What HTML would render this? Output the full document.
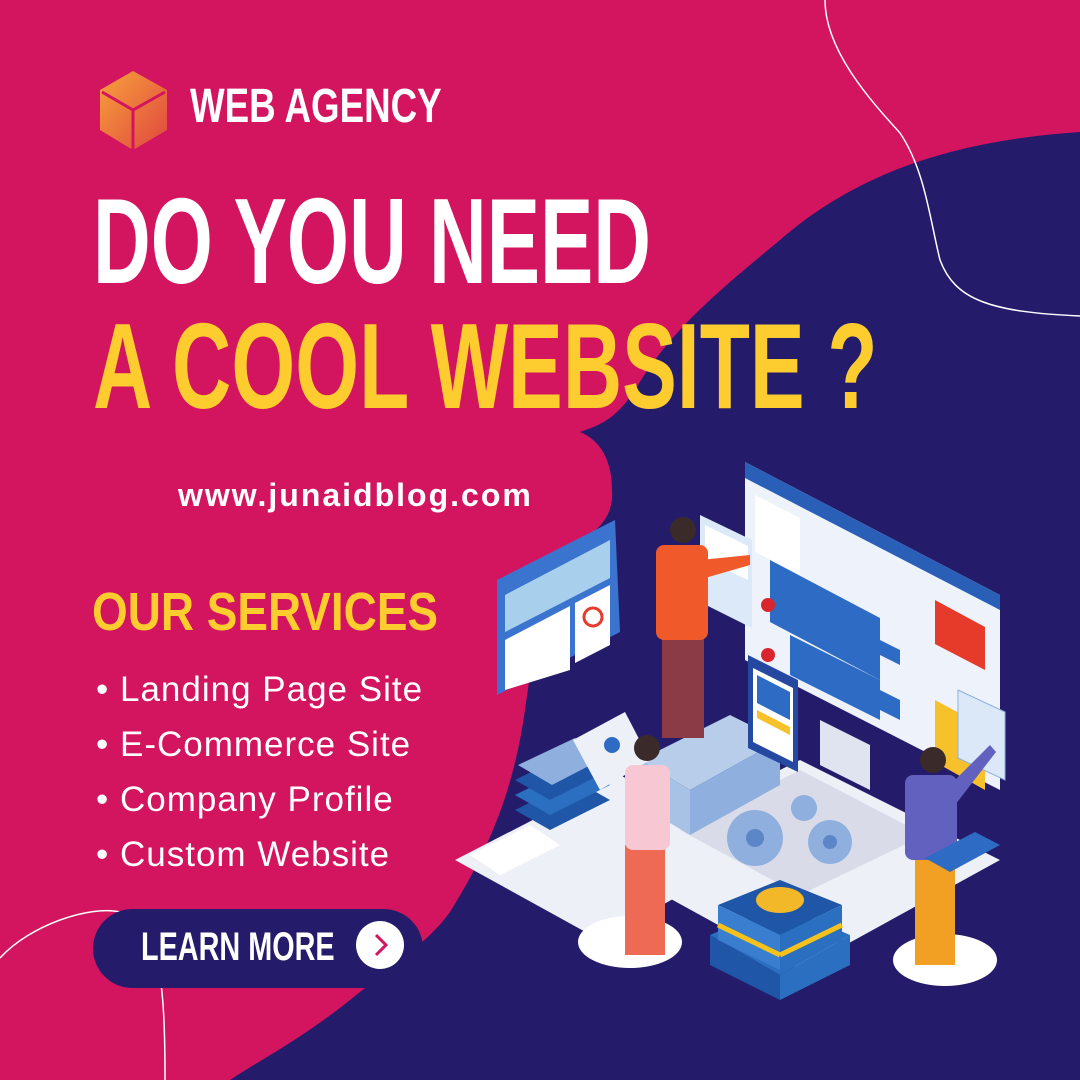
<!DOCTYPE html>
<html><head><meta charset="utf-8"><style>
html,body{margin:0;padding:0}
body{width:1080px;height:1080px;overflow:hidden;background:#d3145f;position:relative;font-family:"Liberation Sans",sans-serif}
svg.bg{position:absolute;left:0;top:0}
.t{position:absolute;white-space:nowrap;font-weight:bold;transform-origin:0 0;line-height:1}
</style></head><body>
<svg class="bg" width="1080" height="1080" viewBox="0 0 1080 1080">
 <path d="M1080 132 C960 140 860 170 780 240 C720 290 670 330 635 390 C615 420 600 425 580 432 C600 440 612 460 612 490 C614 515 600 530 575 545 C545 565 535 640 525 710 C515 780 495 840 450 912 C430 940 400 960 350 1000 C300 1040 260 1060 230 1080 L1080 1080 Z" fill="#241c6a"/>
 <path d="M825 0 C825 50 870 100 900 133 C925 170 930 220 940 260 C955 300 990 312 1080 316" fill="none" stroke="#fff" stroke-width="1.5"/>
 <path d="M0 958 C30 925 90 905 120 912 C160 925 165 980 165 1080" fill="none" stroke="#fff" stroke-width="1.5"/>
 <defs><linearGradient id="g" x1="0" y1="0" x2="1" y2="1"><stop offset="0" stop-color="#f7a23b"/><stop offset="1" stop-color="#e0463f"/></linearGradient></defs>
 <polygon points="133,71 167,90 167,130 133,150 100,130 100,90" fill="url(#g)"/>
 <polyline points="102,92 133,110 165,92" fill="none" stroke="#d3145f" stroke-width="3"/>
 <line x1="133" y1="110" x2="133" y2="150" stroke="#d3145f" stroke-width="3"/>

 <g>
  <polygon points="455,860 620,775 760,850 600,940" fill="#eef0f8"/>
  <polygon points="600,860 800,760 1000,860 800,970" fill="#eef0f8"/>
  <polygon points="680,830 800,770 925,835 800,895" fill="#d9dce8"/>
  <polygon points="640,760 730,715 780,740 690,790" fill="#b8cdea"/>
  <polygon points="690,790 780,740 780,785 690,835" fill="#8fb0de"/>
  <polygon points="640,760 690,790 690,835 640,805" fill="#a8c2e6"/>
  <circle cx="755" cy="838" r="28" fill="#8fb0de"/><circle cx="755" cy="838" r="9" fill="#5d86c8"/>
  <circle cx="830" cy="842" r="22" fill="#8fb0de"/><circle cx="830" cy="842" r="7" fill="#5d86c8"/>
  <circle cx="804" cy="808" r="13" fill="#8fb0de"/>
  <ellipse cx="630" cy="942" rx="52" ry="26" fill="#fff"/>
  <ellipse cx="945" cy="960" rx="52" ry="26" fill="#fff"/>
  <polygon points="710,935 780,905 850,935 780,975" fill="#2a6fc0"/>
  <polygon points="710,935 780,975 780,1000 710,965" fill="#1f56a8"/>
  <polygon points="780,975 850,935 850,965 780,1000" fill="#2a6fc0"/>
  <polygon points="718,905 780,880 842,905 780,935" fill="#1f56a8"/>
  <polygon points="718,905 780,935 780,970 718,940" fill="#3a7ed0"/>
  <polygon points="780,935 842,905 842,940 780,970" fill="#2a6fc0"/>
  <line x1="718" y1="925" x2="780" y2="955" stroke="#f5c21b" stroke-width="5"/>
  <line x1="780" y1="955" x2="842" y2="925" stroke="#f5c21b" stroke-width="5"/>
  <ellipse cx="780" cy="900" rx="24" ry="13" fill="#f3b82a"/>
  <polygon points="470,855 530,825 560,845 500,875" fill="#fff"/>
  <polygon points="515,810 575,780 610,800 550,830" fill="#1f56a8"/>
  <polygon points="515,795 575,765 610,785 550,815" fill="#2a6fc0"/>
  <polygon points="515,780 575,750 610,770 550,800" fill="#1f56a8"/>
  <polygon points="518,765 575,738 608,756 552,785" fill="#8fb0de"/>
  <polygon points="745,462 1000,595 1000,790 745,660" fill="#eef2fb"/>
  <polygon points="745,462 1000,595 1000,610 745,478" fill="#2a5fb8"/>
  <polygon points="755,495 800,518 800,575 755,552" fill="#fff"/>
  <polygon points="770,560 880,618 880,680 770,622" fill="#2e6bc4"/>
  <polygon points="790,635 880,680 880,720 790,675" fill="#2e6bc4"/>
  <polygon points="935,600 985,627 985,670 935,644" fill="#e63a2a"/>
  <polygon points="935,700 985,727 985,790 935,762" fill="#f6c12a"/>
  <polygon points="880,690 900,700 900,720 880,710" fill="#2e6bc4"/>
  <polygon points="880,640 900,650 900,665 880,655" fill="#2e6bc4"/>
  <circle cx="768" cy="605" r="7" fill="#d9262e"/>
  <circle cx="768" cy="655" r="7" fill="#d9262e"/>
  <polygon points="820,720 870,745 870,790 820,765" fill="#dfe4f0"/>
  <polygon points="748,655 798,680 798,772 748,748" fill="#2548a0"/>
  <polygon points="753,668 793,688 793,762 753,742" fill="#fff"/>
  <polygon points="757,675 790,692 790,720 757,703" fill="#2e6bc4"/>
  <polygon points="757,710 790,727 790,735 757,718" fill="#f6c12a"/>
  <polygon points="958,690 1005,712 1005,780 958,758" fill="#dbe8f7" stroke="#8fb0de"/>
  <polygon points="497,580 615,520 620,632 497,695" fill="#3b74cf"/>
  <polygon points="505,595 610,540 610,578 505,632" fill="#a8d0ec"/>
  <polygon points="505,640 570,606 570,670 505,690" fill="#fff"/>
  <polygon points="575,603 610,585 610,645 575,663" fill="#fff"/>
  <circle cx="593" cy="617" r="9" fill="none" stroke="#e63a2a" stroke-width="3"/>
  <polygon points="700,515 752,540 752,628 700,602" fill="#dce9f8"/>
  <polygon points="705,525 748,546 748,580 705,560" fill="#fff"/>
  <polygon points="573,740 625,712 650,760 600,790" fill="#eef0f8"/>
  <circle cx="612" cy="745" r="8" fill="#2e6bc4"/>
  <rect x="662" y="638" width="42" height="100" fill="#8b3b45"/>
  <rect x="656" y="545" width="52" height="95" rx="8" fill="#f05a2a"/>
  <polygon points="700,560 750,555 750,565 705,578" fill="#f05a2a"/>
  <circle cx="683" cy="530" r="13" fill="#3a2a2a"/>
  <rect x="625" y="845" width="40" height="110" fill="#ee6a55"/>
  <rect x="625" y="765" width="45" height="85" rx="8" fill="#f7c8d4"/>
  <circle cx="647" cy="748" r="13" fill="#3a2a2a"/>
  <rect x="915" y="855" width="40" height="110" fill="#f1a023"/>
  <rect x="905" y="775" width="52" height="85" rx="8" fill="#6261c0"/>
  <polygon points="945,790 990,745 996,752 955,805" fill="#6261c0"/>
  <circle cx="933" cy="760" r="13" fill="#3a2a2a"/>
  <polygon points="925,858 975,832 1000,845 950,872" fill="#2e6bc4"/>
 </g>

 <rect x="93" y="909" width="330" height="79" rx="39.5" fill="#241c6a"/>
 <circle cx="380" cy="945" r="24" fill="#fff"/>
 <polyline points="376,935 386,945 376,955" fill="none" stroke="#d3145f" stroke-width="3"/>
</svg>

<div class="t" style="left:190px;top:83px;font-size:48px;color:#fff;transform:scaleX(0.765)">WEB AGENCY</div>
<div class="t" style="left:93px;top:180px;font-size:122px;color:#fff;transform:scaleX(0.655)">DO YOU NEED</div>
<div class="t" style="left:93px;top:305px;font-size:122px;color:#fdcc2f;transform:scaleX(0.673)">A COOL WEBSITE ?</div>
<div class="t" style="left:178px;top:479px;font-size:32px;color:#fff;letter-spacing:2px">www.junaidblog.com</div>
<div class="t" style="left:92px;top:585px;font-size:54px;color:#fdcc2f;transform:scaleX(0.85)">OUR SERVICES</div>
<div class="t" style="left:96px;top:662px;font-size:35px;color:#fff;font-weight:normal;line-height:55px;letter-spacing:1px">• Landing Page Site<br>• E-Commerce Site<br>• Company Profile<br>• Custom Website</div>
<div class="t" style="left:141px;top:927px;font-size:40px;color:#fff;transform:scaleX(0.72)">LEARN MORE</div>
</body></html>
